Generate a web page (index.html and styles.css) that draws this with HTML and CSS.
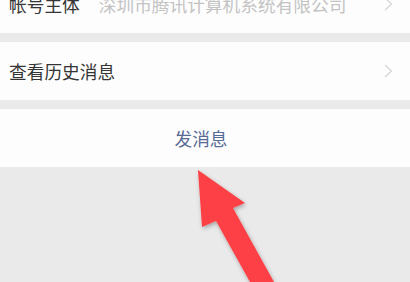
FILE: index.html
```html
<!DOCTYPE html>
<html lang="zh">
<head>
<meta charset="utf-8">
<link rel="stylesheet" href="styles.css">
</head>
<body>
<div class="page">
  <div class="cell first">
    <span class="label">帐号主体</span>
    <span class="value">深圳市腾讯计算机系统有限公司</span>
    <svg class="chev" width="9" height="14" viewBox="0 0 9 14"><path d="M1 1 L7.5 7 L1 13" fill="none" stroke="#d4d4d4" stroke-width="1.2"/></svg>
  </div>
  <div class="cell">
    <span class="label">查看历史消息</span>
    <svg class="chev" width="9" height="14" viewBox="0 0 9 14"><path d="M1 1 L7.5 7 L1 13" fill="none" stroke="#d4d4d4" stroke-width="1.2"/></svg>
  </div>
  <div class="cell action">发消息</div>
</div>
<svg class="arrow" width="410" height="282" viewBox="0 0 410 282">
  <defs>
    <filter id="sh" x="-20%" y="-20%" width="140%" height="140%">
      <feDropShadow dx="1" dy="2" stdDeviation="2" flood-color="#000" flood-opacity="0.3"/>
    </filter>
  </defs>
  <polygon filter="url(#sh)" fill="#fc4145" points="198,170 245,203 233,208 274,282 250,282 216,221 202,227"/>
</svg>
</body>
</html>
```
FILE: styles.css
```css
html, body {
  margin: 0;
  padding: 0;
  background: #eaeaea;
  width: 410px;
  height: 282px;
  overflow: hidden;
}
body {
  font-family: "Noto Sans CJK SC", "Noto Sans", sans-serif;
}
.page {
  margin-top: -25px;
  display: flex;
  flex-direction: column;
  gap: 9px;
}
.cell {
  height: 58px;
  background: #fdfdfd;
  display: flex;
  align-items: center;
  padding: 0 17px 0 9px;
  font-size: 17.7px;
  color: #353535;
}
.label {
  white-space: nowrap;
}
.value {
  margin-left: 19px;
  color: #c3c3c3;
  white-space: nowrap;
}
.chev {
  margin-left: auto;
}
.action {
  justify-content: center;
  padding: 0 8px 0 0;
  color: #576b95;
}
.arrow {
  position: absolute;
  left: 0;
  top: 0;
}
```
